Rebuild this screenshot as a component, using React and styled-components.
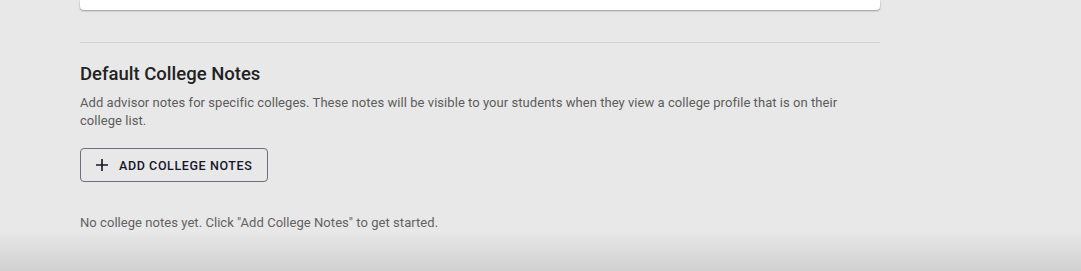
import styled, { createGlobalStyle } from "styled-components"

const Global = createGlobalStyle`
  html, body {
    margin: 0;
    padding: 0;
    background: #e8e8e8;
    font-family: Roboto, "Liberation Sans", sans-serif;
  }
`

const Page = styled.div`
  padding: 0 0 0 80px;
  width: 800px;
`

const CardEdge = styled.div`
  height: 10px;
  background: #fff;
  border-radius: 0 0 4px 4px;
  box-shadow: 0 1px 2px rgba(0, 0, 0, 0.35);
`

const Divider = styled.hr`
  margin: 32px 0 0;
  border: 0;
  border-top: 1px solid #d2d2d2;
`

const Section = styled.section`
  padding-top: 20px;
`

const Title = styled.h2`
  margin: 0;
  font-size: 18.5px;
  line-height: 22px;
  font-weight: 500;
  color: #222;
`

const Description = styled.p`
  margin: 9px 0 0;
  font-size: 13px;
  line-height: 18px;
  letter-spacing: 0.05px;
  color: #5c5c5c;
  max-width: 780px;
`

const OutlineButton = styled.button`
  margin-top: 18px;
  display: flex;
  align-items: center;
  gap: 10px;
  height: 34px;
  padding: 0 15px 0 14px;
  background: transparent;
  border: 1px solid #6e6e80;
  border-radius: 4px;
  font-family: inherit;
  font-size: 12.5px;
  font-weight: 500;
  letter-spacing: 0.6px;
  color: #16162a;
  cursor: pointer;
`

const Empty = styled.p`
  margin: 32px 0 0;
  font-size: 13px;
  line-height: 18px;
  letter-spacing: 0.05px;
  color: #626262;
`

const BottomFade = styled.div`
  position: fixed;
  left: 0;
  right: 0;
  bottom: 0;
  height: 40px;
  background: linear-gradient(to bottom, rgba(0, 0, 0, 0), rgba(0, 0, 0, 0.1));
  pointer-events: none;
`

const Plus = () => (
  <svg width="14" height="14" viewBox="0 0 14 14">
    <path d="M7 1v12M1 7h12" stroke="#16162a" strokeWidth="1.6" fill="none" />
  </svg>
)

export default function App() {
  return (
    <>
      <Global />
      <Page>
        <CardEdge />
        <Divider />
        <Section>
          <Title>Default College Notes</Title>
          <Description>
            Add advisor notes for specific colleges. These notes will be visible to your students when they view a college profile that is on their college list.
          </Description>
          <OutlineButton>
            <Plus />
            ADD COLLEGE NOTES
          </OutlineButton>
          <Empty>No college notes yet. Click "Add College Notes" to get started.</Empty>
        </Section>
      </Page>
      <BottomFade />
    </>
  )
}
